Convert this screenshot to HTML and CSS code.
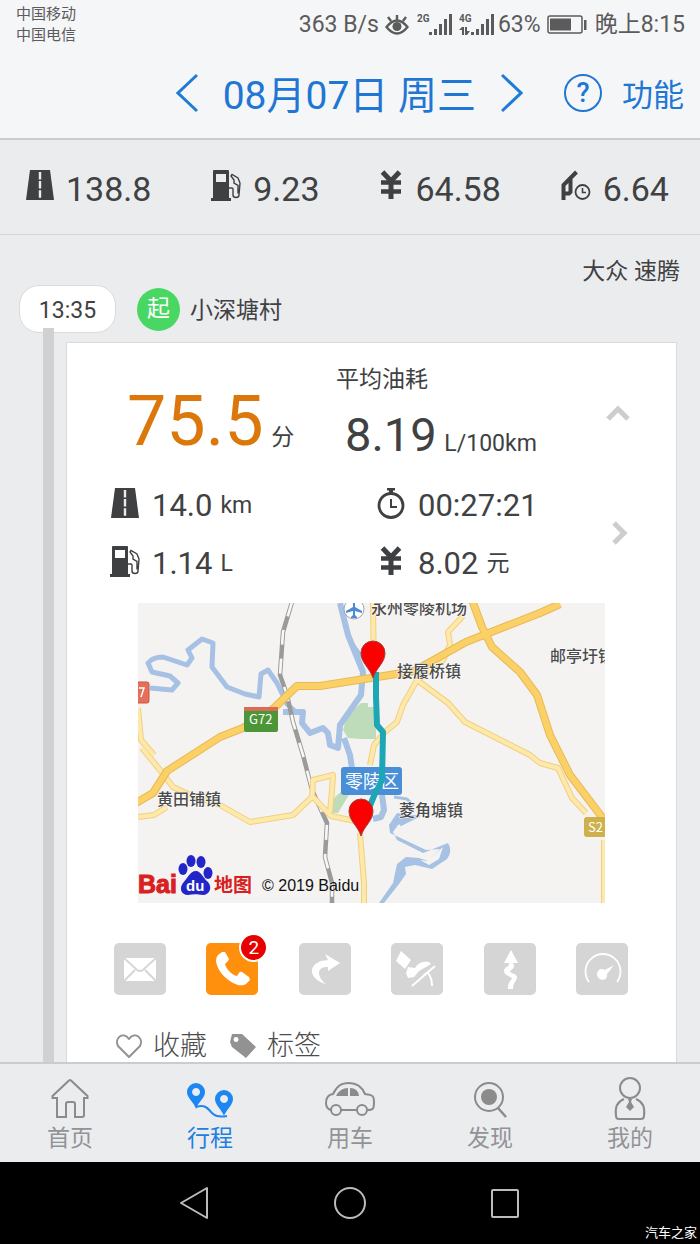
FILE: index.html
```html
<!DOCTYPE html>
<html lang="zh-CN">
<head>
<meta charset="utf-8">
<meta name="viewport" content="width=device-width, initial-scale=1">
<title>行程</title>
<link rel="stylesheet" href="styles.css">
</head>
<body>
<svg class="defs" aria-hidden="true">
  <symbol id="road" viewBox="0 0 28 30"><path fill="#3f4042" d="M4 0h20l4 30H0z"/><path stroke="#ececee" stroke-width="2.400" stroke-dasharray="7.500 1.600" d="M14 2v26"/></symbol>
  <symbol id="pump" viewBox="0 0 30 31"><path fill="#3f4042" fill-rule="evenodd" d="M2 1q0-1 1-1h14q1 0 1 1v27h2v3H0v-3h2zM5 4v8h10V4z"/><path fill="none" stroke="#3f4042" stroke-width="1.400" d="M18 18h3q1 0 1 1v6q0 2.500 3 2.500t3-2.500l1-12-2-5-6-3.500L20 6l3 4v3l4 2.500v8"/></symbol>
  <symbol id="yen" viewBox="0 0 22 30"><path fill="none" stroke="#3f4042" stroke-width="5" d="M2.500 2l8.500 9 8.500-9M11 9v20"/><path fill="none" stroke="#3f4042" stroke-width="4.400" d="M1 12.500h20M1 21.500h20"/></symbol>
  <symbol id="idle" viewBox="0 0 30 30"><path fill="none" stroke="#3f4042" stroke-width="4" d="M15.500 2L9.500 8 2.500 15v15M2.500 23.500H8L9.500 22V8"/><circle cx="21.500" cy="22" r="7" fill="none" stroke="#3f4042" stroke-width="1.800"/><path fill="none" stroke="#3f4042" stroke-width="1.600" d="M21.500 18v4.500H25"/></symbol>
  <symbol id="clock" viewBox="0 0 28 32"><circle cx="14" cy="18.500" r="12" fill="none" stroke="#3f4042" stroke-width="2.800"/><path fill="#3f4042" d="M10 1h8v2.500h-2V7h-4V3.500h-2z"/><path fill="none" stroke="#3f4042" stroke-width="2" d="M14 12v8h6"/></symbol>
</svg>
<div class="app">
  <header class="top">
    <div class="status">
      <div class="carriers">中国移动<br>中国电信</div>
      <div class="indicators">
        <span>363 B/s</span>
        <svg class="eye" width="24" height="24" viewBox="0 0 24 24" fill="none" stroke="#5b5b5b" stroke-width="2.400"><path d="M1.500 14q10.500-13 21 0-10.500 13-21 0zM12 7V2M6 8L3 4M18 8l3-4"/><circle cx="12" cy="13.500" r="4.500" fill="#5b5b5b" stroke="none"/></svg>
        <svg class="sig" width="36" height="24" viewBox="0 0 36 24" fill="#5b5b5b"><text x="0" y="9">2G</text><path d="M12 19h3v3h-3zM17 16h3v6h-3zM22 11h3v11h-3zM27 6h3v16h-3zM32 1h3v21h-3z"/></svg>
        <svg class="sig last" width="36" height="24" viewBox="0 0 36 24" fill="#5b5b5b"><text x="0" y="9">4G</text><path d="M12 19h3v3h-3zM17 16h3v6h-3zM22 11h3v11h-3zM27 6h3v16h-3zM32 1h3v21h-3zM3 14h2v8H3v-5H0zM6 14h2v4h3l-3 4H6z"/></svg>
        <span>63%</span>
        <svg class="battery" width="40" height="20" viewBox="0 0 40 20"><rect x="1" y="1" width="34" height="17" rx="2" fill="none" stroke="#5b5b5b" stroke-width="1.500"/><path fill="#5b5b5b" d="M3 3.500h21v12H3zM37 5h2.500v10H37z"/></svg>
        <span>晚上8:15</span>
      </div>
    </div>
    <div class="datebar">
      <button type="button" aria-label="前一天"><svg width="22" height="40" viewBox="0 0 22 40"><path d="M21 2L2 20l19 18"/></svg></button>
      <h1>08月07日 周三</h1>
      <button type="button" aria-label="后一天"><svg width="22" height="40" viewBox="0 0 22 40"><path d="M1 2l19 18L1 38"/></svg></button>
      <button type="button" class="help">?</button>
      <button type="button" class="func">功能</button>
    </div>
  </header>

  <section class="totals">
    <div class="total"><svg width="28" height="30"><use href="#road"/></svg><span>138.8</span></div>
    <div class="total"><svg width="30" height="31"><use href="#pump"/></svg><span>9.23</span></div>
    <div class="total"><svg width="24" height="30"><use href="#yen"/></svg><span>64.58</span></div>
    <div class="total"><svg width="30" height="30"><use href="#idle"/></svg><span>6.64</span></div>
  </section>

  <main class="trips">
    <p class="vehicle">大众 速腾</p>
    <div class="start"><time class="time">13:35</time><span class="badge-start">起</span><span class="place-name">小深塘村</span></div>
    <div class="leg">
      <div class="rail"></div>
      <article class="card">
        <div class="summary">
          <div class="figures">
            <div class="lead">
              <p class="score"><strong>75.5</strong> <span>分</span></p>
              <div class="average"><p>平均油耗</p><p class="avgvalue"><strong>8.19</strong> <span>L/100km</span></p></div>
            </div>
            <div class="metrics">
              <div class="metric"><svg width="28" height="30"><use href="#road"/></svg><b>14.0</b><span>km</span></div>
              <div class="metric"><svg width="28" height="32"><use href="#clock"/></svg><b>00:27:21</b></div>
              <div class="metric"><svg width="30" height="31"><use href="#pump"/></svg><b>1.14</b><span>L</span></div>
              <div class="metric"><svg width="22" height="30"><use href="#yen"/></svg><b>8.02</b><span>元</span></div>
            </div>
          </div>
          <div class="side">
            <button type="button" aria-label="收起"><svg width="26" height="26" viewBox="0 0 26 26"><path d="M3 19l10-10 10 10"/></svg></button>
            <button type="button" aria-label="详情"><svg width="26" height="26" viewBox="0 0 26 26"><path d="M9 3l10 10L9 23"/></svg></button>
          </div>
        </div>

        <svg class="map" viewBox="138 603 467 300" role="img" aria-label="行程地图">
          <path fill="#f4f3f1" d="M138 603h467v300H138z"/>
          <path fill="#bedcba" d="M343 730l4-14 14-13h7v4h8v32h-16l-12-1zM334 798l10-9 6 4-12 20h-6z"/>
          <g fill="none" stroke="#a6c1e3" stroke-width="5" stroke-linejoin="round">
            <path d="M150 688l22 2 6-7-8-7-18-4-4-9q5-6 15-6l15 5 9 3 5-7-4-8 14-11 11 4-1 24 15 20 18 7 14 3 2-23 7-4 9 13 10 21 10 9"/>
            <path stroke-width="6" d="M283 712h20l-1 11 8 10 13-5 5 5 2 12 8 3 2-23 21-30 2-23-15-37-8-32M344 738l6 17 3 20 16 5M382 795l2 15-3 7-8 2"/>
            <path stroke-width="3" d="M350 640l13 18M394 797l13 2 7 7M420 815l-20 10"/>
          </g>
          <path fill="#a6c1e3" d="M420 816l-22 9-5 7 4 8 26 13 25-10q5 8-1 16l-15 10-17-4-10 2 1 7-7 10-15 19h-5l14-20 4-19 9-7 13 1 9 3 12-12-14 1-36-17-1-8 8-12z"/>
          <path fill="#f4f3f1" d="M427 861l16-14-4 12-10 6-9-5z"/>
          <g fill="none" stroke-linejoin="round">
            <path stroke="#9a9a9a" stroke-width="4.500" d="M292 602l-9 30-3 43 7 20 6 27 10 33 9 35 15 33-2 34 7 26v20"/>
            <path stroke="#f7f7f7" stroke-width="2.600" stroke-dasharray="15 14" d="M292 602l-9 30-3 43 7 20 6 27 10 33 9 35 15 33-2 34 7 26v20"/>
            <path stroke="#f2cf7d" stroke-width="6" d="M417 680l31 23 17 19 65 33 10 8 18 5 14 30 14 15M463 616l-15 16 2 13-7 15-26 20-14 25-6 17-12 10-11 13-4 20M373 603l1 72M142 748l18 22 13 17 15 7 32 11 30 17 43-7 19-18 1-17 20-5-1 15-2 22M313 797l18 19 24 5M360 833l4 50v20M138 817l16-2 13-8M138 708l3 32 13 15M604 840v63"/>
            <path stroke="#fee9ac" stroke-width="4" d="M417 680l31 23 17 19 65 33 10 8 18 5 14 30 14 15M463 616l-15 16 2 13-7 15-26 20-14 25-6 17-12 10-11 13-4 20M373 603l1 72M142 748l18 22 13 17 15 7 32 11 30 17 43-7 19-18 1-17 20-5-1 15-2 22M313 797l18 19 24 5M360 833l4 50v20M138 817l16-2 13-8M138 708l3 32 13 15M604 840v63"/>
            <path stroke="#e9b955" stroke-width="8" d="M136 803l17-10 14-22 53-34 23-9 30-19 24-23h23l70-11 24-4 52-29 38-15 36-14 20-9M472 600l10 27 10 20 28 25 17 23 13 40 20 40 35 46"/>
            <path stroke="#fbd067" stroke-width="6" d="M136 803l17-10 14-22 53-34 23-9 30-19 24-23h23l70-11 24-4 52-29 38-15 36-14 20-9M472 600l10 27 10 20 28 25 17 23 13 40 20 40 35 46"/>
          </g>
          <circle cx="354" cy="609" r="10" fill="#fff" stroke="#9aa6b8"/><path fill="#4c8bd2" d="M353 602q1-2 2 0v5l7 4v2l-7-2v4l2 2v1h-6v-1l2-2v-4l-7 2v-2l7-4z"/>
          <rect x="244" y="707" width="34" height="25" rx="2" fill="#4c9638"/><path fill="#dc6b55" d="M244 707h34v4h-34z"/><text class="sign" x="249" y="724">G72</text>
          <rect x="134" y="682" width="15" height="21" rx="2" fill="#e56f59" stroke="#c95845"/><path fill="none" stroke="#fff" stroke-width="1.500" d="M139 688h5l-3 9"/>
          <rect x="584" y="817" width="26" height="20" rx="3" fill="#ceb04d"/><text class="sign" x="588" y="832">S2</text>
          <rect x="341" y="767" width="61" height="28" rx="3" fill="#488fd7"/><text class="district" x="345" y="788">零陵区</text>
          <g class="place"><text x="371" y="614">永州零陵机场</text><text x="397" y="677">接履桥镇</text><text x="550" y="662">邮亭圩镇</text><text x="157" y="805">黄田铺镇</text><text x="399" y="816">菱角塘镇</text></g>
          <path fill="none" stroke="#1da6b5" stroke-width="6" stroke-linejoin="round" d="M376 672v25l1 28 6 7-1 48-8 16-5 12"/>
          <g fill="#fa0000" stroke="#a43d3d" stroke-width="1"><path d="M373 678c-3-10-12-15-12-25a12 12 0 0 1 24 0c0 10-9 15-12 25z"/><path d="M361 836c-3-10-12-15-12-25a12 12 0 0 1 24 0c0 10-9 15-12 25z"/></g>
          <text class="bai" x="138" y="893">Bai</text>
          <g fill="#2226c8"><ellipse cx="183" cy="869" rx="4.500" ry="6"/><ellipse cx="191" cy="861" rx="4.500" ry="6"/><ellipse cx="201" cy="862" rx="4.500" ry="6"/><ellipse cx="208" cy="873" rx="4.500" ry="6"/><path d="M196 871c5 0 7 7 12 11 5 6 1 13-5 13-6-1-10-1-15 0-7 0-9-7-5-12 4-4 7-12 13-12z"/></g>
          <text class="du" x="186" y="891">du</text><text class="ditu" x="214" y="892">地图</text>
          <text class="copy" x="262" y="891">© 2019 Baidu</text>
        </svg>

        <div class="tiles">
          <button type="button" aria-label="消息"><svg viewBox="0 0 52 52"><path fill="#fff" d="M10 15h32v23H10z"/><path fill="none" stroke="#d5d5d5" stroke-width="1.800" d="M10 15l13 12q3 2 6 0l13-12M10 38l11-11M42 38L31 27"/></svg></button>
          <button type="button" class="active" aria-label="电话"><svg viewBox="0 0 52 52"><path fill="#fff" d="M16 9l-4 3c-5 6 1 17 8 23 8 7 16 9 20 6l4-4-1-3-7-5q-2-1-3 1l-2 3c-5-1-11-7-12-12l3-3 1-2-4-7z"/></svg><span class="count">2</span></button>
          <button type="button" aria-label="转弯"><svg viewBox="0 0 52 52"><path fill="#fff" d="M27 41C8 36 8 18 29 17l-3-6 15 9-12 8v-4c-10-1-13 8-2 17z"/></svg></button>
          <button type="button" aria-label="刹车"><svg viewBox="0 0 52 52"><path fill="#fff" d="M10 8l10 9-6 9-9-8zM17 24l7 1c4-6 8-7 14-6l2 2-12 7-5 6-6 1-2-5z"/><path fill="none" stroke="#fff" stroke-width="2" d="M44 23L21 43M37 30q4 5 4 13M38 28l-6 5"/></svg></button>
          <button type="button" aria-label="弯道"><svg viewBox="0 0 52 52"><path fill="#fff" d="M27 7l7 13h-5c2 4 1 5-3 8-1 2 7 3 7 6 0 4-4 5-4 12h-5c0-8 3-8 4-11-3-2-8-3-8-7s6-4 5-8h-5z"/></svg></button>
          <button type="button" aria-label="车速"><svg viewBox="0 0 52 52"><path fill="none" stroke="#fff" stroke-width="1.800" d="M13 39a17.500 17.500 0 1 1 28 0"/><path fill="#fff" d="M38 22l-7 9c1 8-9 7-10 1 0-6 5-7 8-5z"/></svg></button>
        </div>

        <div class="actions">
          <button type="button"><svg width="28" height="24" viewBox="0 0 28 24"><path fill="none" stroke="#929292" stroke-width="2" stroke-linejoin="round" d="M14 23L3 12C-1 4 8-3 14 5c6-8 15-1 11 7z"/></svg>收藏</button>
          <button type="button"><svg width="28" height="26" viewBox="0 0 28 26"><path fill="#929292" fill-rule="evenodd" d="M3 1h10l14 13-10 11L3 14 1 9zM7 4a2.500 2.500 0 1 0 .1 0z"/></svg>标签</button>
        </div>
      </article>
    </div>
  </main>

  <nav class="tabs">
    <a href="#home"><svg viewBox="0 0 50 44"><path d="M12 41V22H7.500v-2L24 4.500q1-1 2 0L42.500 20v2H39v17q0 2-2 2h-7V28q0-2-2-2h-5q-2 0-2 2v13z"/></svg>首页</a>
    <a href="#trips" class="current"><svg viewBox="0 0 50 44"><path fill="#1c86f2" stroke="none" fill-rule="evenodd" d="M11 33C9 26 2 22 2 16a9 9 0 0 1 18 0c0 6-7 10-9 17zM11 12a4 4 0 1 0 .1 0zM39 40c-2-6-9-11-9-17a9 9 0 0 1 18 0c0 6-7 11-9 17zM39 19a4 4 0 1 0 .1 0z"/><path d="M11 31c10-3 12 2 16 6q5 5 15 3"/></svg>行程</a>
    <a href="#car"><svg viewBox="0 0 50 44"><path d="M6 34q-5-1-5-7 0-8 7-9C12 10 16 7 24 7s13 4 16 11c8 1 9 2 9 8 0 7-1 8-6 8M16 34h15"/><circle cx="11" cy="34" r="5"/><circle cx="37" cy="34" r="5"/><path fill="#8b8b8b" stroke="none" d="M23 12v8H11q4-8 12-8zM25 12q8 0 9 8h-9z"/></svg>用车</a>
    <a href="#find"><svg viewBox="0 0 50 44"><circle cx="24" cy="21" r="14"/><circle cx="24" cy="21" r="8" fill="#8b8b8b" stroke="none"/><path stroke-width="2.500" d="M33 32l8 9"/></svg>发现</a>
    <a href="#me"><svg viewBox="0 0 50 44"><circle cx="25" cy="12" r="10"/><path d="M19 23c-8 3-9 10-8 17q0 3 3 3h22q3 0 3-3c1-7 0-14-8-17"/><path fill="#8b8b8b" stroke="none" d="M23 23h4l-1 3 3 5-4 4-4-4 3-5z"/></svg>我的</a>
  </nav>
  <footer class="system">
    <button type="button" aria-label="返回"><svg width="34" height="36" viewBox="0 0 34 36"><path d="M29 3v30L3 18z"/></svg></button>
    <button type="button" aria-label="主屏幕"><svg width="34" height="36" viewBox="0 0 34 36"><circle cx="17" cy="18" r="15"/></svg></button>
    <button type="button" aria-label="最近任务"><svg width="34" height="36" viewBox="0 0 34 36"><rect x="4" y="5" width="26" height="27" rx="1"/></svg></button>
    <span class="mark">汽车之家</span>
  </footer>
</div>
</body>
</html>
```
FILE: styles.css
```css
* { box-sizing: border-box; }
body, h1, p { margin: 0; }
body {
  font-family: Roboto, "Noto Sans CJK SC", sans-serif;
  font-size: 23px;
  line-height: 32px;
  color: #404143;
  background: #ebecee;
}
button {
  padding: 0;
  border: 0;
  background: none;
  font: inherit;
  color: inherit;
}
svg { display: block; flex: none; }
.defs { position: absolute; width: 0; height: 0; }
.app { display: flex; flex-direction: column; height: 100vh; }

.top { flex: none; background: #f5f6f8; border-bottom: 2px solid #cbcccf; }
.status {
  display: flex;
  justify-content: space-between;
  height: 48px;
  padding: 4px 15px 0 16px;
  color: #5b5b5b;
}
.carriers { font-size: 15px; line-height: 21px; }
.indicators { display: flex; align-items: center; gap: 6px; height: 42px; }
.sig text { font: bold 10px Roboto, sans-serif; }
.eye { margin-right: 2px; }
.last { margin-right: -3px; }
.battery { margin-right: 2px; }
.datebar {
  display: flex;
  align-items: center;
  justify-content: flex-end;
  height: 90px;
  padding-right: 16px;
  color: #1f76d3;
}
.datebar path { fill: none; stroke: #1f7cd6; stroke-width: 3; }
.datebar h1 { margin: 0 25px; padding-top: 5px; font-size: 39px; font-weight: 400; line-height: 48px; }
.help {
  width: 38px;
  height: 38px;
  margin: 0 20px 0 41px;
  border: 2px solid #1f76d3;
  border-radius: 50%;
  font-size: 27px;
  font-weight: 500;
}
.func { padding-top: 5px; font-size: 31px; }

.totals {
  flex: none;
  display: flex;
  justify-content: space-between;
  height: 95px;
  padding: 0 31px 0 26px;
  border-bottom: 1px solid #d6d7d9;
}
.total { display: flex; align-items: center; gap: 12px; font-size: 34px; }
.total svg { margin-bottom: 4px; }
.total span { padding-top: 4px; }

.trips { flex: 1; min-height: 0; overflow: hidden; display: flex; flex-direction: column; }
.vehicle { padding: 21px 20px 0; text-align: right; }
.start { flex: none; display: flex; align-items: center; height: 46px; margin: -2px 0 10px 19px; }
.time {
  width: 97px;
  height: 48px;
  border: 1px solid #d9dadc;
  border-radius: 20px;
  background: #fff;
  line-height: 50px;
  text-align: center;
}
.badge-start {
  width: 43px;
  height: 43px;
  margin: 0 10px 0 21px;
  border-radius: 50%;
  background: #49d763;
  color: #fff;
  line-height: 41px;
  text-align: center;
}
.place-name { padding-top: 3px; }
.leg { flex: 1; min-height: 0; display: flex; padding: 0 23px 0 43px; }
.rail { flex: none; width: 11px; margin: -14px 12px 0 0; background: #d0d1d3; }
.card { flex: 1; min-width: 0; background: #fff; border: 1px solid #d9dadc; border-bottom: 0; }

.summary { display: flex; justify-content: space-between; height: 260px; padding: 0 28px 0 43px; }
.figures { flex: 1; }
.lead { display: flex; height: 131px; }
.score { width: 209px; margin-left: 17px; padding-top: 43px; line-height: 70px; }
.score strong { font-size: 70px; font-weight: 400; color: #dc780b; }
.score span, .avgvalue span { margin-left: 2px; }
.average { padding-top: 21px; }
.avgvalue { padding: 15px 0 0 9px; line-height: 48px; white-space: nowrap; }
.avgvalue strong { font-size: 47px; font-weight: 400; }
.metrics { display: grid; grid-template-columns: 266px 1fr; grid-auto-rows: 58px; }
.metric { display: grid; grid-template-columns: 30px auto auto; justify-content: start; align-items: center; column-gap: 12px; white-space: nowrap; }
.metric svg { justify-self: center; }
.metric b { font-size: 31px; font-weight: 400; padding-top: 5px; }
.metric span { margin-left: -4px; padding-top: 5px; }
.side { display: flex; flex-direction: column; padding-top: 10px; }
.side button { width: 60px; height: 120px; display: grid; place-items: center; }
.side path { fill: none; stroke: #cdcdcd; stroke-width: 5; }

.map { width: auto; margin: 0 71px; }
.map text { font-family: "Noto Sans CJK SC", sans-serif; }
.place { font-size: 16px; font-weight: 500; fill: #4b4b4b; stroke: #fff; stroke-width: 1px; paint-order: stroke; }
.sign { font-size: 13px; fill: #fff; }
.district { font-size: 18px; fill: #fff; }
.map .bai { font: bold 25px "Liberation Sans", sans-serif; fill: #d9201f; stroke: #d9201f; }
.map .du { font: bold 15px "Liberation Sans", sans-serif; fill: #fff; }
.ditu { font-size: 19px; font-weight: 700; fill: #d9201f; }
.map .copy { font: 16px "Liberation Sans", sans-serif; fill: #111; }

.tiles { display: flex; justify-content: space-between; padding: 40px 48px 0 47px; }
.tiles button { position: relative; width: 52px; height: 52px; border-radius: 5px; background: #d5d5d5; }
.tiles .active { background: #ff900d; }
.count {
  position: absolute;
  top: -10px;
  right: -10px;
  width: 29px;
  height: 29px;
  border: 2px solid #fff;
  border-radius: 50%;
  background: #e80000;
  color: #fff;
  font-size: 19px;
  line-height: 26px;
}
.actions { display: flex; gap: 22px; padding: 33px 0 0 48px; }
.actions button { display: flex; align-items: center; gap: 10px; height: 36px; font-size: 27px; font-weight: 300; color: #4c4c4c; }

.tabs {
  flex: none;
  display: grid;
  grid-template-columns: repeat(5, 1fr);
  height: 100px;
  padding-top: 12px;
  border-top: 2px solid #cbccd0;
}
.tabs a { display: flex; flex-direction: column; align-items: center; gap: 2px; line-height: 34px; color: #929397; text-decoration: none; }
.tabs svg { width: 50px; height: 44px; fill: none; stroke: #8b8b8b; stroke-width: 2; }
.tabs .current { color: #1f7fe0; }
.tabs .current svg { stroke: #1c86f2; }
.system { flex: none; position: relative; display: flex; align-items: center; justify-content: center; gap: 121px; height: 82px; background: #000; }
.system svg { fill: none; stroke: #bcbcbc; stroke-width: 2; stroke-linejoin: round; }
.mark { position: absolute; right: 3px; bottom: 2px; font-size: 13px; line-height: 18px; color: #fff; }
```
